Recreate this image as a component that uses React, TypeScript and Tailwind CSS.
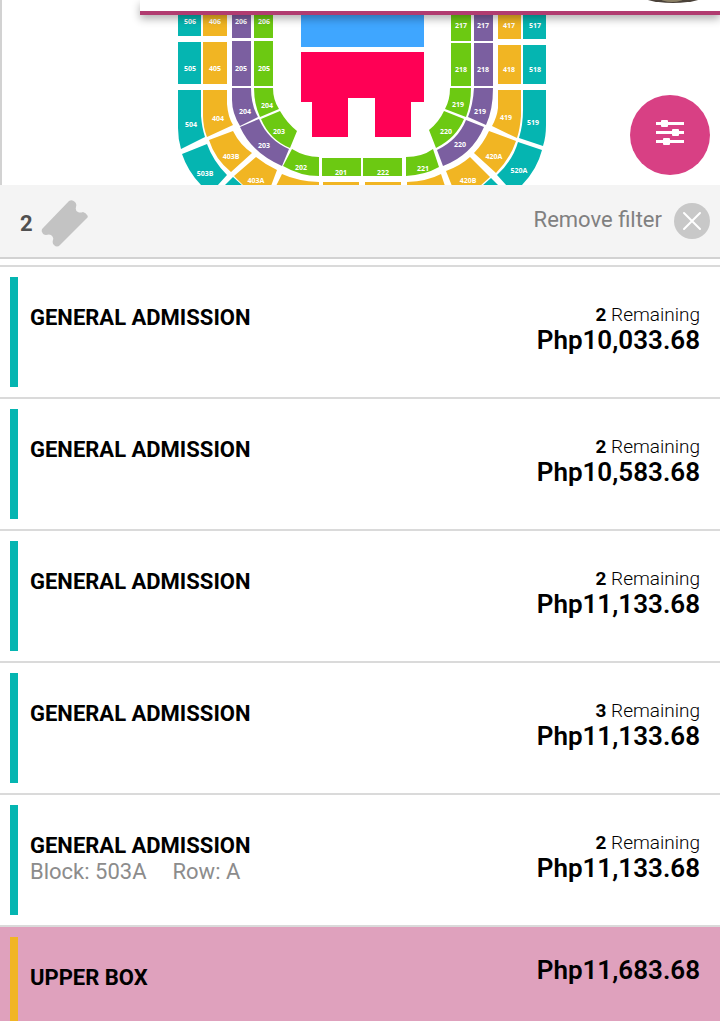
const TEAL = "#05b5b1";
const GOLD = "#f1b523";
const PURPLE = "#7b5fa0";
const GREEN = "#6cc912";

type Block = { d: string; fill: string; label?: string; x?: number; y?: number };

const blocks: Block[] = [
  // left stand
  { d: "M178 0H201V36H178Z", fill: TEAL, label: "506", x: 190, y: 24 },
  { d: "M203 0H227V36H203Z", fill: GOLD, label: "406", x: 215, y: 24 },
  { d: "M232 0H251V38H232Z", fill: PURPLE, label: "206", x: 241, y: 24 },
  { d: "M254 0H273V38H254Z", fill: GREEN, label: "206", x: 264, y: 24 },
  { d: "M178 42H201V84H178Z", fill: TEAL, label: "505", x: 190, y: 71 },
  { d: "M203 42H227V84H203Z", fill: GOLD, label: "405", x: 215, y: 71 },
  { d: "M232 41H251V86H232Z", fill: PURPLE, label: "205", x: 241, y: 71 },
  { d: "M254 41H273V86H254Z", fill: GREEN, label: "205", x: 264, y: 71 },
  { d: "M178 90H201V116Q202 128 205 137L181 149Q178 139 178 128Z", fill: TEAL, label: "504", x: 191, y: 127 },
  { d: "M203 90H227V104Q228 117 233 125L207 137Q203 127 203 116Z", fill: GOLD, label: "404", x: 218, y: 121 },
  { d: "M232 88H251Q251 105 258 117L240 126Q232 113 232 100Z", fill: PURPLE, label: "204", x: 245, y: 114 },
  { d: "M254 88H273Q273 100 279 109L260 117Q254 104 254 88Z", fill: GREEN, label: "204", x: 267, y: 108 },
  { d: "M261 119L280 111Q287 123 297 131L290 148Q270 140 261 119Z", fill: GREEN, label: "203", x: 279, y: 134 },
  { d: "M240 127L259 119Q268 140 289 149L282 166Q252 153 240 127Z", fill: PURPLE, label: "203", x: 264, y: 148 },
  { d: "M209 140L233 131Q240 145 252 153L231 172Q215 159 209 140Z", fill: GOLD, label: "403B", x: 231, y: 159 },
  { d: "M182 154L207 144Q213 161 227 175L217 186H202Q188 172 182 154Z", fill: TEAL, label: "503B", x: 205, y: 176 },
  { d: "M234 176L256 157Q266 165 277 170L271 186H244Z", fill: GOLD, label: "403A", x: 256, y: 183 },
  { d: "M224 186L233 177L243 186Z", fill: TEAL },
  // bottom stand
  { d: "M276 186L282 174Q297 181 319 182V186Z", fill: GOLD },
  { d: "M323 182H359V186H323Z", fill: GOLD },
  { d: "M365 182H401V186H365Z", fill: GOLD },
  { d: "M407 182Q428 181 441 174L445 186H407Z", fill: GOLD },
  { d: "M292 149Q305 157 319 157V176Q300 176 283 166Z", fill: GREEN, label: "202", x: 301, y: 170 },
  { d: "M322 158H361V176H322Z", fill: GREEN, label: "201", x: 341, y: 175 },
  { d: "M363 158H402V176H363Z", fill: GREEN, label: "222", x: 383, y: 175 },
  { d: "M406 157Q422 157 433 149L439 167Q425 175 406 176Z", fill: GREEN, label: "221", x: 423, y: 171 },
  // right stand
  { d: "M451 0H471V41H451Z", fill: GREEN, label: "217", x: 461, y: 28 },
  { d: "M474 0H493V41H474Z", fill: PURPLE, label: "217", x: 483, y: 28 },
  { d: "M498 0H521V39H498Z", fill: GOLD, label: "417", x: 509, y: 28 },
  { d: "M523 0H546V39H523Z", fill: TEAL, label: "517", x: 535, y: 28 },
  { d: "M451 43H471V86H451Z", fill: GREEN, label: "218", x: 461, y: 72 },
  { d: "M474 43H493V86H474Z", fill: PURPLE, label: "218", x: 483, y: 72 },
  { d: "M498 45H521V84H498Z", fill: GOLD, label: "418", x: 509, y: 72 },
  { d: "M523 45H546V84H523Z", fill: TEAL, label: "518", x: 535, y: 72 },
  { d: "M450 88H471Q471 104 466 117L445 109Q450 100 450 88Z", fill: GREEN, label: "219", x: 458, y: 107 },
  { d: "M474 88H493Q493 110 486 125L468 117Q473 105 474 88Z", fill: PURPLE, label: "219", x: 480, y: 114 },
  { d: "M498 90H521V116Q520 129 517 138L492 126Q497 117 498 108Z", fill: GOLD, label: "419", x: 506, y: 120 },
  { d: "M523 90H546V125Q546 137 543 146L519 138Q523 125 523 110Z", fill: TEAL, label: "519", x: 533, y: 125 },
  { d: "M444 111L464 119Q456 138 436 148L429 130Q439 122 444 111Z", fill: GREEN, label: "220", x: 446, y: 134 },
  { d: "M466 120L484 127Q472 155 443 166L437 150Q458 140 466 120Z", fill: PURPLE, label: "220", x: 460, y: 147 },
  { d: "M489 131L516 141Q510 159 496 173L474 153Q483 144 489 131Z", fill: GOLD, label: "420A", x: 494, y: 159 },
  { d: "M518 142L542 150Q537 170 521 186H507L497 175Q513 160 518 142Z", fill: TEAL, label: "520A", x: 519, y: 173 },
  { d: "M446 171Q460 166 470 157L490 177L480 186H452Z", fill: GOLD, label: "420B", x: 468, y: 183 },
  { d: "M482 186L491 178L499 186Z", fill: TEAL },
];

type Ticket = {
  id: number;
  title: string;
  price: string;
  remaining?: number;
  block?: string;
  row?: string;
  upper?: boolean;
};

const tickets: Ticket[] = [
  { id: 1, title: "GENERAL ADMISSION", price: "Php10,033.68", remaining: 2 },
  { id: 2, title: "GENERAL ADMISSION", price: "Php10,583.68", remaining: 2 },
  { id: 3, title: "GENERAL ADMISSION", price: "Php11,133.68", remaining: 2 },
  { id: 4, title: "GENERAL ADMISSION", price: "Php11,133.68", remaining: 3 },
  { id: 5, title: "GENERAL ADMISSION", price: "Php11,133.68", remaining: 2, block: "503A", row: "A" },
  { id: 6, title: "UPPER BOX", price: "Php11,683.68", upper: true },
];

const SeatMap = () => (
  <svg width="372" height="185" viewBox="175 0 372 185" className="shrink-0" role="img" aria-label="Seat map">
    {blocks.map((b) => (
      <path key={b.d} d={b.d} fill={b.fill} />
    ))}
    <path d="M301 0H424V47H301Z" fill="#3fa6ff" />
    <path d="M301 52H424V102H411V137H375V98H348V137H312V102H301Z" fill="#ff0055" />
    <g fill="#fff" fontSize="7" fontWeight="700" textAnchor="middle" className="font-['Open_Sans',sans-serif]">
      {blocks
        .filter((b) => b.label)
        .map((b) => (
          <text key={b.d} x={b.x} y={b.y}>
            {b.label}
          </text>
        ))}
    </g>
  </svg>
);

const MapPanel = () => (
  <section className="relative flex h-[185px] shrink-0 justify-center overflow-hidden border-l-2 border-[#d2d2d2]">
    <SeatMap />
    <div className="absolute top-0 right-0 left-[138px] flex h-[15px] justify-end border-b-4 border-[#b13c70] bg-white pr-4 shadow-[0_4px_8px_rgba(0,0,0,0.3)]">
      <svg width="64" height="4" viewBox="0 0 64 4" aria-hidden="true">
        <ellipse cx="33" cy="-9" rx="38" ry="12" fill="#4b4239" />
        <ellipse cx="32" cy="-2" rx="12" ry="4" fill="#8b8065" />
      </svg>
    </div>
    <button
      type="button"
      aria-label="Filters"
      className="absolute right-[10px] bottom-[10px] flex size-20 items-center justify-center rounded-full bg-[#d84084]"
    >
      <svg width="80" height="80" viewBox="0 0 80 80" fill="#fff">
        <path d="M26 27h28v3H26zM26 36h28v3H26zM26 45h28v3H26z" />
        <rect x="31" y="25" width="7" height="7" rx="1" />
        <rect x="42" y="34" width="7" height="7" rx="1" />
        <rect x="33" y="43" width="7" height="7" rx="1" />
      </svg>
    </button>
  </section>
);

const FilterBar = () => (
  <div className="flex h-[74px] shrink-0 items-center justify-between border-b-2 border-[#d2d2d2] bg-[#f4f4f4] pr-[10px] pl-5">
    <div className="flex items-center gap-2 pt-1">
      <span className="pt-[2px] text-[22px] leading-[26px] font-bold text-[#505050]">2</span>
      <svg width="47" height="47" viewBox="0 0 47 47" fill="#c3c3c3" role="img" aria-label="tickets">
        <path d="M28 1Q31 -1 34 2Q36 4 35 7Q34 11 37 12Q39 13 42 12Q45 13 46 15Q48 17 45 19L19 45Q16 48 13 45Q11 43 12 40Q13 37 10 35Q8 34 5 35Q2 35 1 32Q0 30 2 28Z" />
      </svg>
    </div>
    <button type="button" className="flex items-center gap-3 text-[22px] leading-[26px] text-[#808080]">
      <span className="pb-[2px]">Remove filter</span>
      <svg width="36" height="36" viewBox="0 0 36 36" aria-hidden="true">
        <circle cx="18" cy="18" r="18" fill="#c8c8c8" />
        <path d="M10 10L26 26M26 10L10 26" stroke="#fff" strokeWidth="2" strokeLinecap="round" />
      </svg>
    </button>
  </div>
);

const TicketRow = ({ ticket }: { ticket: Ticket }) => (
  <li className={`border-b-2 border-[#dadada] ${ticket.upper ? "bg-[#dfa1bd]" : "bg-white"}`}>
    <button type="button" className="flex w-full items-start gap-3 py-[10px] pr-5 pl-[10px] text-left">
      <span className={`h-[110px] w-2 shrink-0 ${ticket.upper ? "bg-[#f1b523]" : "bg-[#05b5b1]"}`} />
      <span className="flex-1 pt-7 text-[22px] leading-[26px]">
        <span className="block font-bold">{ticket.title}</span>
        {ticket.block && (
          <span className="flex gap-[26px] text-[#8c8c8c]">
            <span>Block: {ticket.block}</span>
            <span>Row: {ticket.row}</span>
          </span>
        )}
      </span>
      <span className={`text-right ${ticket.remaining ? "pt-7" : "pt-[18px]"}`}>
        {ticket.remaining && (
          <span className="block text-[19px] leading-5 font-light">
            <b className="font-bold">{ticket.remaining}</b> Remaining
          </span>
        )}
        <span className="block text-[26px] leading-[30px] font-semibold">{ticket.price}</span>
      </span>
    </button>
  </li>
);

const App = () => {
  return (
    <main className="flex h-screen flex-col bg-white font-[Roboto,sans-serif] text-black">
      <MapPanel />
      <FilterBar />
      <ul className="mt-[6px] min-h-0 flex-1 overflow-y-auto border-t-2 border-[#dadada] [scrollbar-width:none]">
        {tickets.map((ticket) => (
          <TicketRow key={ticket.id} ticket={ticket} />
        ))}
      </ul>
    </main>
  );
};

export default App;
